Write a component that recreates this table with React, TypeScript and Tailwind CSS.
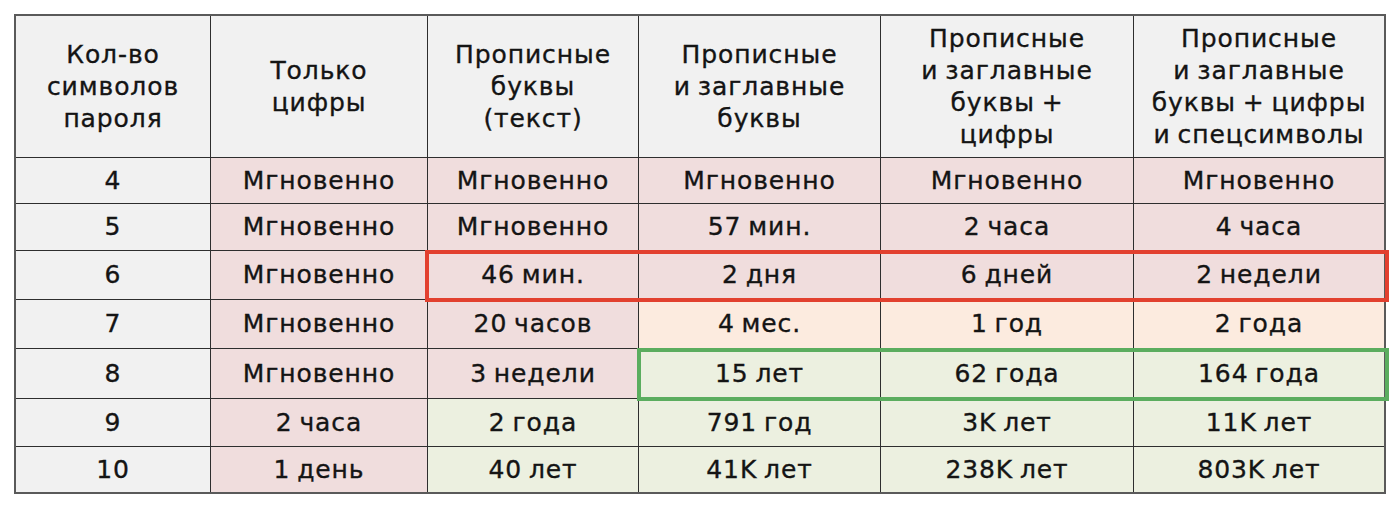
import React from "react";

type Tone = "g" | "p" | "o" | "e";

const toneClass: Record<Tone, string> = {
  g: "bg-[#f1f1f1]",
  p: "bg-[#f0dddd]",
  o: "bg-[#fcebdf]",
  e: "bg-[#ecf0e0]",
};

const headers = [
  ["Кол-во", "символов", "пароля"],
  ["Только", "цифры"],
  ["Прописные", "буквы", "(текст)"],
  ["Прописные", "и заглавные", "буквы"],
  ["Прописные", "и заглавные", "буквы +", "цифры"],
  ["Прописные", "и заглавные", "буквы + цифры", "и спецсимволы"],
];

const rows: { cells: string[]; tones: Tone[]; h: string }[] = [
  { cells: ["4", "Мгновенно", "Мгновенно", "Мгновенно", "Мгновенно", "Мгновенно"], tones: ["g", "p", "p", "p", "p", "p"], h: "h-[45px]" },
  { cells: ["5", "Мгновенно", "Мгновенно", "57 мин.", "2 часа", "4 часа"], tones: ["g", "p", "p", "p", "p", "p"], h: "h-[46px]" },
  { cells: ["6", "Мгновенно", "46 мин.", "2 дня", "6 дней", "2 недели"], tones: ["g", "p", "p", "p", "p", "p"], h: "h-[48px]" },
  { cells: ["7", "Мгновенно", "20 часов", "4 мес.", "1 год", "2 года"], tones: ["g", "p", "p", "o", "o", "o"], h: "h-[48px]" },
  { cells: ["8", "Мгновенно", "3 недели", "15 лет", "62 года", "164 года"], tones: ["g", "p", "p", "e", "e", "e"], h: "h-[49px]" },
  { cells: ["9", "2 часа", "2 года", "791 год", "3K лет", "11K лет"], tones: ["g", "p", "e", "e", "e", "e"], h: "h-[47px]" },
  { cells: ["10", "1 день", "40 лет", "41K лет", "238K лет", "803K лет"], tones: ["g", "p", "e", "e", "e", "e"], h: "h-[45px]" },
];

export default function App() {
  return (
    <div className="w-[1400px] h-[509px] bg-white relative overflow-hidden" style={{ fontFamily: '"DejaVu Sans", "Noto Sans", sans-serif' }}>
      <div className="absolute left-0 top-0 w-full h-full">
        <div className="ml-[14px] mt-[14px] w-[1372px] border-2 border-[#5a5a5a] bg-[#2e2e2e]">
          <div className="grid grid-cols-[194px_216px_210px_241px_252px_250px] gap-px text-[#141414] text-[25px] tracking-[0.9px] [word-spacing:-2px] [-webkit-text-stroke:0.35px_#141414]">
            {headers.map((lines, i) => (
              <div key={i} className="h-[141px] bg-[#f1f1f1] flex flex-col items-center justify-center leading-[32px] text-center">
                {lines.map((l, j) => (
                  <div key={j} className="whitespace-nowrap">{l}</div>
                ))}
              </div>
            ))}
            {rows.map((r, ri) =>
              r.cells.map((c, ci) => (
                <div key={ri + "-" + ci} className={`${r.h} ${toneClass[r.tones[ci]]} flex items-center justify-center whitespace-nowrap`}>
                  {c}
                </div>
              ))
            )}
          </div>
        </div>
      </div>
      <div className="absolute left-[425px] top-[250px] w-[964px] h-[52px] border-[4px] border-[#e2402f]" />
      <div className="absolute left-[637px] top-[348px] w-[752px] h-[53px] border-[4px] border-[#5bad5f]" />
    </div>
  );
}
